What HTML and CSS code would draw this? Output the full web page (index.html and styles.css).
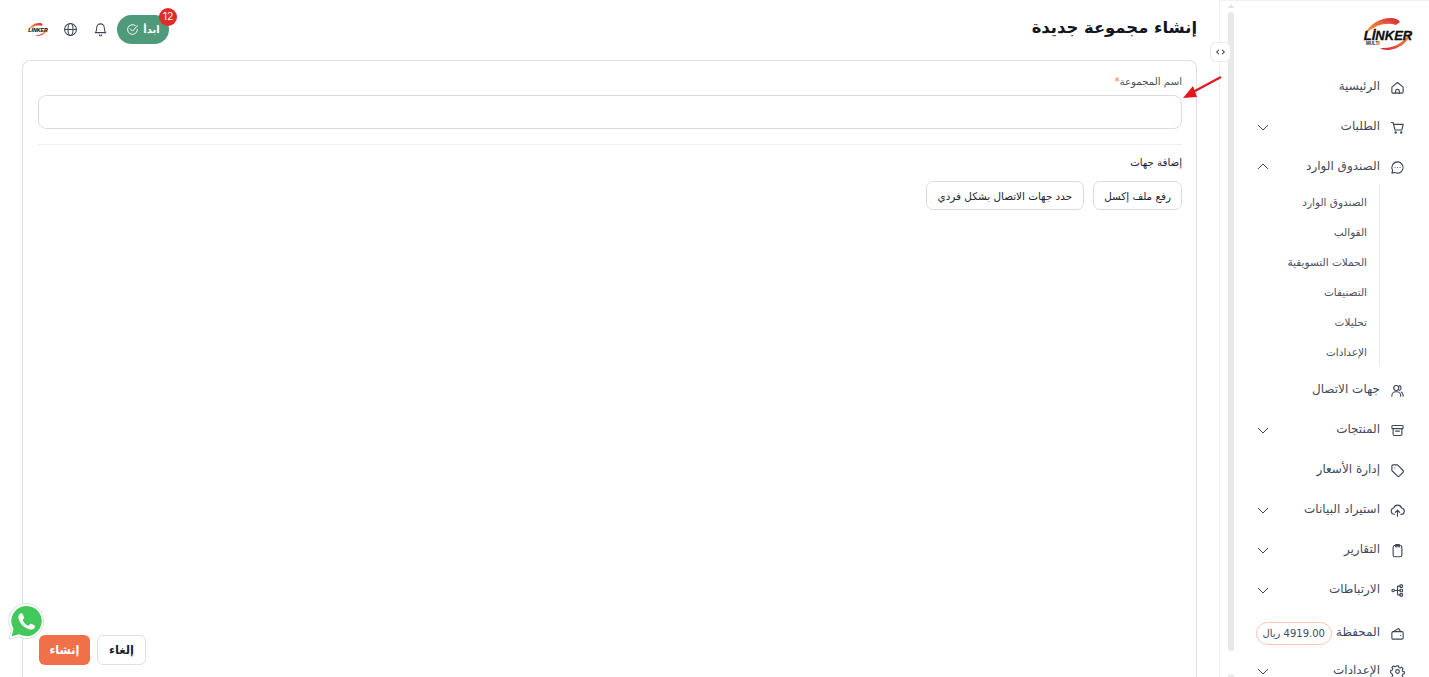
FILE: index.html
```html
<!DOCTYPE html>
<html lang="ar" dir="rtl">
<head>
<meta charset="utf-8">
<title>إنشاء مجموعة جديدة</title>
<link rel="stylesheet" href="styles.css">
</head>
<body>
<div class="app">
  <aside class="sidebar">
    <div class="logo-row">
      <svg class="logo" viewBox="0 0 50 32" aria-hidden="true">
        <defs>
          <linearGradient id="arcTop" x1="0" y1="1" x2="1" y2="0"><stop offset="0" stop-color="#f2a03d"/><stop offset=".55" stop-color="#ec6a3a"/><stop offset="1" stop-color="#d41f3f"/></linearGradient>
          <linearGradient id="arcBottom" x1="1" y1="0" x2="0" y2="1"><stop offset="0" stop-color="#f2a03d"/><stop offset=".5" stop-color="#ec6a3a"/><stop offset="1" stop-color="#d41f3f"/></linearGradient>
        </defs>
        <path d="M1 17C6 7 16 0 28 0c4 0 7 1 9 4l-4 3C24 4 12 7 4 15z" fill="url(#arcTop)"/>
        <path d="M49 12c-2 11-13 20-25 20-3 0-5-1-7-2 13 1 24-5 30-16z" fill="url(#arcBottom)"/>
        <text x="25" y="22" class="logo-text" text-anchor="middle" direction="ltr">LİNKER</text>
        <text x="3" y="26.500" class="logo-sub" direction="ltr">MULTI</text>
      </svg>
    </div>
    <nav class="nav">
      <a class="item"><svg class="ico" viewBox="0 0 24 24"><path d="M3 11.500 12 4l9 7.500V19a2 2 0 0 1-2 2H5a2 2 0 0 1-2-2z"/><path d="M9 21v-3a3 3 0 0 1 6 0v3"/></svg><span class="lbl">الرئيسية</span></a>
      <a class="item"><svg class="ico" viewBox="0 0 24 24"><path d="M2 4h3l3 12h11l2-9H6"/><circle cx="9" cy="20" r="1"/><circle cx="18" cy="20" r="1"/></svg><span class="lbl">الطلبات</span><svg class="chev" viewBox="0 0 12 12"><path d="M1 4l5 5 5-5"/></svg></a>
      <a class="item"><svg class="ico" viewBox="0 0 24 24"><path d="M12 3a9 9 0 1 1-4.500 16.800L3 21l1.200-4.500A9 9 0 0 1 12 3z"/><path d="M8 12h.01M12 12h.01M16 12h.01"/></svg><span class="lbl">الصندوق الوارد</span><svg class="chev" viewBox="0 0 12 12"><path d="M1 8l5-5 5 5"/></svg></a>
      <div class="sub">
        <a class="sub-item">الصندوق الوارد</a>
        <a class="sub-item">القوالب</a>
        <a class="sub-item">الحملات التسويقية</a>
        <a class="sub-item">التصنيفات</a>
        <a class="sub-item">تحليلات</a>
        <a class="sub-item">الإعدادات</a>
      </div>
      <a class="item"><svg class="ico" viewBox="0 0 24 24"><circle cx="10" cy="8" r="4"/><path d="M3 21v-1a6 6 0 0 1 6-6h2a6 6 0 0 1 6 6v1"/><path d="M15 4.200a4 4 0 0 1 0 7.600M18 14.500a6 6 0 0 1 3 5.500v1"/></svg><span class="lbl">جهات الاتصال</span></a>
      <a class="item"><svg class="ico" viewBox="0 0 24 24"><rect x="3" y="4" width="18" height="5" rx="1.500"/><path d="M5 9v9a2 2 0 0 0 2 2h10a2 2 0 0 0 2-2V9"/><path d="M9 13h6"/></svg><span class="lbl">المنتجات</span><svg class="chev" viewBox="0 0 12 12"><path d="M1 4l5 5 5-5"/></svg></a>
      <a class="item"><svg class="ico" viewBox="0 0 24 24"><path d="M12 3H5a2 2 0 0 0-2 2v7l9 9a2 2 0 0 0 2.800 0l6.200-6.200a2 2 0 0 0 0-2.800z"/><path d="M7.500 7.500h.01"/></svg><span class="lbl">إدارة الأسعار</span></a>
      <a class="item"><svg class="ico" viewBox="0 0 24 24"><path d="M7 18a5 5 0 0 1-1-9.900A6.500 6.500 0 0 1 18.500 8 5 5 0 0 1 17 18"/><path d="M12 21v-9M8.500 15l3.500-3.500 3.500 3.500"/></svg><span class="lbl">استيراد البيانات</span><svg class="chev" viewBox="0 0 12 12"><path d="M1 4l5 5 5-5"/></svg></a>
      <a class="item"><svg class="ico" viewBox="0 0 24 24"><rect x="5" y="4" width="14" height="18" rx="3"/><path d="M9 2.500h6V6H9z"/></svg><span class="lbl">التقارير</span><svg class="chev" viewBox="0 0 12 12"><path d="M1 4l5 5 5-5"/></svg></a>
      <a class="item"><svg class="ico" viewBox="0 0 24 24"><circle cx="5" cy="12" r="2"/><rect x="16" y="3" width="4" height="4" rx="1"/><rect x="16" y="10" width="4" height="4" rx="1"/><rect x="16" y="17" width="4" height="4" rx="1"/><path d="M7 12h9M12 12V6c0-1 .5-1 1-1h3M12 12v6c0 1 .5 1 1 1h3"/></svg><span class="lbl">الارتباطات</span><svg class="chev" viewBox="0 0 12 12"><path d="M1 4l5 5 5-5"/></svg></a>
      <a class="item wallet"><svg class="ico" viewBox="0 0 24 24"><path d="M5 9h14a2 2 0 0 1 2 2v8a2 2 0 0 1-2 2H5a2 2 0 0 1-2-2v-8a2 2 0 0 1 2-2z"/><path d="M5 9l9-5 3 5"/><path d="M17 15h.01"/></svg><span class="lbl">المحفظة</span><span class="pill">4919.00 ريال</span></a>
      <a class="item"><svg class="ico" viewBox="0 0 24 24"><circle cx="12" cy="12" r="3"/><path d="M10.300 3h3.400l.5 2.600 2 .9 2.300-1.400 2.400 2.400-1.400 2.300.9 2 2.600.5v3.400l-2.600.5-.9 2 1.400 2.300-2.400 2.400-2.300-1.400-2 .9-.5 2.600h-3.400l-.5-2.600-2-.9-2.300 1.400-2.400-2.400 1.400-2.300-.9-2L1 13.700v-3.400l2.600-.5.900-2-1.400-2.300 2.400-2.400 2.300 1.400 2-.9z"/></svg><span class="lbl">الإعدادات</span><svg class="chev" viewBox="0 0 12 12"><path d="M1 4l5 5 5-5"/></svg></a>
    </nav>
    <div class="scrollbar"><span class="scroll-up"></span><span class="thumb"></span><span class="thumb-end"></span></div>
    <button class="collapse" type="button" aria-label="طي القائمة">
      <svg viewBox="0 0 12 8" aria-hidden="true"><path d="M4 1 1 4l3 3M8 1l3 3-3 3"/></svg>
    </button>
  </aside>

  <main class="main">
    <header class="topbar">
      <h1 class="title">إنشاء مجموعة جديدة</h1>
      <div class="tools">
        <button class="start" type="button">
          <span class="badge">12</span>
          <span>ابدأ</span>
          <svg class="start-ico" viewBox="0 0 24 24"><path d="M21 12a9 9 0 1 1-4-7.500"/><path d="M8 11l4 4 9-10"/></svg>
        </button>
        <svg class="tool" viewBox="0 0 24 24"><path d="M6 9a6 6 0 0 1 12 0c0 6 2.500 8 2.500 8h-17S6 15 6 9z"/><path d="M10 20.500a2 2 0 0 0 4 0"/></svg>
        <svg class="tool" viewBox="0 0 24 24"><circle cx="12" cy="12" r="9.500"/><ellipse cx="12" cy="12" rx="4" ry="9.500"/><path d="M2.500 12h19"/></svg>
        <svg class="mini-logo" viewBox="0 0 50 32" aria-hidden="true">
          <path d="M1 17C6 7 16 0 28 0c4 0 7 1 9 4l-4 3C24 4 12 7 4 15z" fill="url(#arcTop)"/>
          <path d="M49 12c-2 11-13 20-25 20-3 0-5-1-7-2 13 1 24-5 30-16z" fill="url(#arcBottom)"/>
          <text x="25" y="22" class="logo-text" text-anchor="middle" direction="ltr">LİNKER</text>
        </svg>
      </div>
    </header>

    <section class="card">
      <label class="field-label">اسم المجموعة<span class="req">*</span></label>
      <div class="input"></div>
      <hr class="divider">
      <div class="section-label">إضافة جهات</div>
      <div class="choices">
        <button class="choice" type="button">رفع ملف إكسل</button>
        <button class="choice" type="button">حدد جهات الاتصال بشكل فردي</button>
      </div>
      <div class="actions">
        <button class="btn primary" type="button">إنشاء</button>
        <button class="btn ghost" type="button">إلغاء</button>
      </div>
    </section>
  </main>
</div>

<svg class="arrow" viewBox="0 0 40 24" aria-hidden="true"><path d="M39 1 11 16" stroke="#e3171d" stroke-width="2.200" fill="none"/><path d="M1 22 11 10l4 11z" fill="#e3171d"/></svg>

<svg class="whatsapp" viewBox="0 0 40 40" aria-hidden="true">
  <path d="M20 1.500a18 18 0 0 0-15.500 27.200L2 38l9.600-2.400A18 18 0 1 0 20 1.500z" fill="#fff" stroke="#d5e3de"/>
  <path d="M20 4a15.500 15.500 0 0 0-13.300 23.500L4.800 35l7.700-2A15.500 15.500 0 1 0 20 4z" fill="#43c95b"/>
  <path d="M14.500 11.500c-1 0-2.800 1.500-2.800 4 0 6 7 12.800 13 12.800 2.600 0 4-1.800 4-3.200 0-.7-.2-1-.6-1.200l-3.300-1.600c-.5-.2-.9-.1-1.200.3l-1.100 1.400c-.3.300-.6.400-1 .2-2.300-1-4.300-3-5.300-5.200-.2-.4-.1-.7.200-1l1-1.200c.3-.4.300-.7.100-1.100l-1.400-3.400c-.3-.6-.6-.8-1.100-.8z" fill="#fff"/>
</svg>
</body>
</html>
```
FILE: styles.css
```css
* { box-sizing: border-box; }
html, body { margin: 0; height: 100%; overflow: hidden; background: #fff; }
body { font-family: "DejaVu Sans", "Noto Sans", sans-serif; color: #1b2333; position: relative; }
button { font-family: inherit; cursor: pointer; }

.app { display: flex; height: 677px; }

.sidebar { position: relative; flex: 0 0 210px; border-left: 1px solid #eceef1; box-shadow: inset 0 1px 0 #eef1f6; }
.logo-row { height: 67px; display: flex; align-items: flex-start; padding: 18px 16px 0 0; }
.logo { width: 50px; height: 32px; overflow: visible; }
.logo-text { font: italic 700 13px "Liberation Sans", sans-serif; fill: #0d0d0d; stroke: #0d0d0d; stroke-width: .3px; }
.logo-sub { font: 700 4.500px "Liberation Sans", sans-serif; fill: #222; }
.nav { display: flex; flex-direction: column; padding-right: 24px; }
.item { height: 40px; display: flex; align-items: center; gap: 10px; color: #40495a; font-size: 12px; position: relative; }
.lbl { padding-bottom: 2px; }
.ico { width: 15px; height: 15px; flex: none; fill: none; stroke: #3e4757; stroke-width: 1.800; stroke-linecap: round; stroke-linejoin: round; }
.chev { width: 12px; height: 12px; flex: none; fill: none; stroke: #3e4757; stroke-width: 1; margin-right: auto; margin-left: 37px; }
.sub { border-right: 1px solid #e7e8ea; margin-right: 25px; height: 182px; padding-top: 3px; display: flex; flex-direction: column; margin-top: -3px; margin-bottom: 4px; }
.sub-item { height: 30px; line-height: 30px; padding-right: 12px; font-size: 10.500px; color: #4a5261; }
.wallet { height: 36px; margin-top: 5px; }
.pill { margin-right: -6px; height: 23px; line-height: 21px; padding: 0 6px; border: 1px solid #f6c8b4; border-radius: 12px; font-size: 10px; color: #40495a; white-space: nowrap; }

.scrollbar { position: absolute; left: 8px; top: 0; bottom: 0; width: 6px; }
.scroll-up { position: absolute; top: 4px; left: 0; border: 3px solid transparent; border-bottom: 4px solid #e3e3e3; border-top: 0; }
.thumb { position: absolute; top: 12px; left: 0; width: 6px; height: 639px; background: #e8e8e8; border-radius: 3px; }
.thumb-end { position: absolute; top: 674px; left: 0; width: 6px; height: 3px; background: #ececec; }
.collapse { position: absolute; top: 42px; left: -10px; width: 21px; height: 20px; padding: 0; display: flex; align-items: center; justify-content: center; background: #fff; border: 1px solid #e8eaee; border-radius: 6px; z-index: 2; }
.collapse svg { width: 9px; height: 6px; fill: none; stroke: #2a3140; stroke-width: 1.400; }

.main { flex: 1; min-width: 0; padding: 0 22px; display: flex; flex-direction: column; }
.topbar { height: 60px; display: flex; align-items: center; justify-content: space-between; padding: 0 0 1px 6px; }
.title { margin: 0 0 5px; font-size: 16.400px; font-weight: 700; color: #11151d; }
.tools { display: flex; align-items: center; gap: 15px; }
.start { position: relative; width: 52px; height: 29px; margin-left: -6px; border: 0; border-radius: 15px; background: #4f9a7a; color: #fff; font-size: 10px; font-weight: 700; display: flex; align-items: center; justify-content: center; gap: 4px; padding: 0; }
.start-ico { width: 13px; height: 13px; fill: none; stroke: #fff; stroke-width: 1.800; stroke-linecap: round; }
.badge { position: absolute; top: -7px; left: 42px; width: 18px; height: 18px; border-radius: 50%; background: #e02b27; color: #fff; font: 400 10.500px/18px "Inter", sans-serif; text-align: center; }
.tool { width: 15px; height: 15px; fill: none; stroke: #3e4757; stroke-width: 1.700; stroke-linecap: round; stroke-linejoin: round; }
.mini-logo { width: 20px; height: 13px; overflow: visible; }

.card { flex: 1; border: 1px solid #dde1e6; border-bottom: 0; border-radius: 8px 8px 0 0; padding: 14px 14px 0 15px; position: relative; }
.field-label { display: block; font-size: 10.200px; line-height: 14px; color: #4a5261; }
.req { color: #ef7a55; }
.input { height: 34px; margin-top: 6px; border: 1px solid #d8dce6; border-radius: 8px; background: #fff; }
.divider { border: 0; border-top: 1px solid #eceef1; margin: 15px 0 11px; }
.section-label { font-size: 10.200px; line-height: 14px; color: #1b2333; }
.choices { display: flex; gap: 9px; margin-top: 11px; }
.choice { height: 29px; padding: 0 11px; border: 1px solid #d8dce6; border-radius: 7px; background: #fff; font-size: 10.400px; font-weight: 500; color: #1b2333; }
.choice:first-child { padding: 0 10px; }
.actions { position: absolute; bottom: 12px; left: 16px; display: flex; gap: 7px; flex-direction: row-reverse; }
.btn { height: 30px; border-radius: 6px; font-size: 11.500px; font-weight: 700; padding: 0; }
.primary { width: 51px; background: #f0704a; border: 0; color: #fff; }
.ghost { width: 49px; background: #fff; border: 1px solid #dde1e6; color: #1b2333; }

.arrow { position: absolute; left: 1182px; top: 76px; width: 40px; height: 24px; }
.whatsapp { position: absolute; left: 7px; top: 602px; width: 39px; height: 39px; }
```
